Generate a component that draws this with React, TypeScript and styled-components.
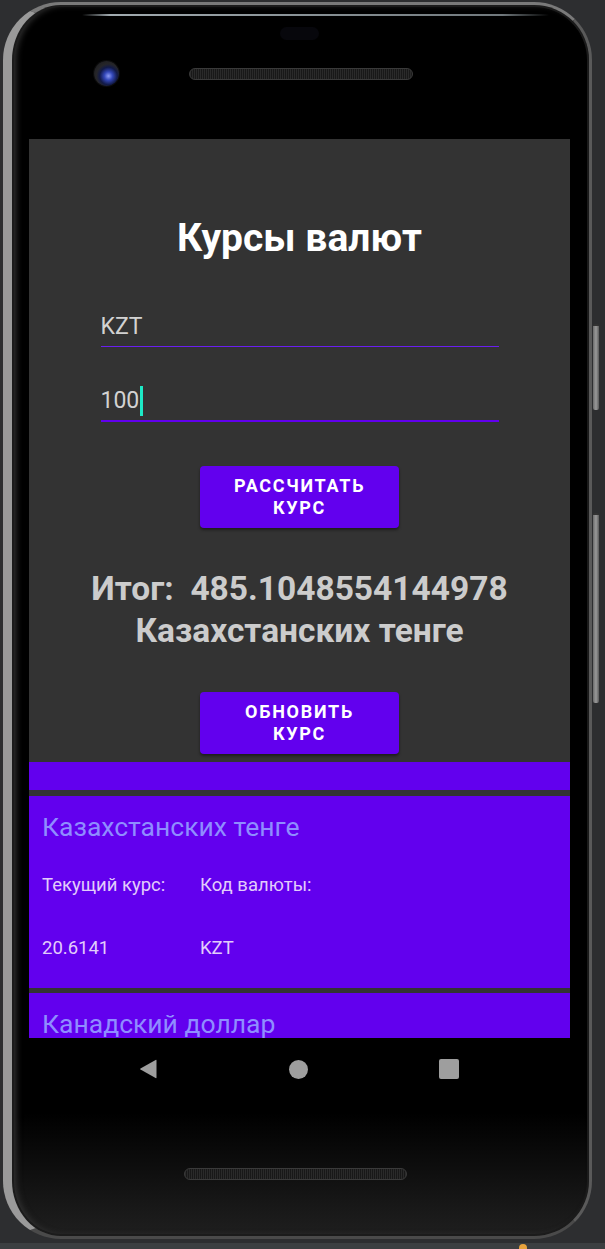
import React from "react";
import styled, { createGlobalStyle } from "styled-components";

const Global = createGlobalStyle`
  html, body { margin: 0; padding: 0; background: #2d2e30; }
  body { font-family: Roboto, "Noto Sans", Arial, sans-serif; }
  * { box-sizing: border-box; }
`;

const Page = styled.div`
  width: 605px;
  height: 1249px;
  overflow: hidden;
  padding-top: 2px;
  display: flex;
  flex-direction: column;
`;

const Frame = styled.div`
  position: relative;
  flex-shrink: 0;
  margin-left: 3px;
  width: 589px;
  height: 1237px;
  border-radius: 58px;
  border-style: solid;
  border-width: 3px 3px 3px 9px;
  border-color: #7a7a7a #5a5a5a #4a4a4a #9a9a9a;
  background: linear-gradient(180deg, #000 0%, #000 90%, #1f1f1f 100%);
  box-shadow: inset 0 0 0 2px #1b1b1b, inset 4px 0 6px #333;
  display: flex;
  flex-direction: column;
  padding: 0 19px 0 17px;
`;

const Glare = styled.div`
  position: absolute;
  top: 9px;
  left: 70px;
  right: 40px;
  height: 2px;
  border-radius: 2px;
  background: linear-gradient(90deg, rgba(170,180,185,0) 0%, rgba(170,180,185,0.95) 6%, rgba(140,150,155,0.8) 90%, rgba(140,150,155,0) 100%);
`;

const SideButton = styled.div<{ $top: number; $h: number }>`
  position: absolute;
  right: -10px;
  top: ${(p) => p.$top}px;
  width: 6px;
  height: ${(p) => p.$h}px;
  border-radius: 2px;
  background: linear-gradient(90deg, #6a6a6a, #9a9a9a 50%, #5a5a5a);
  border-top: 2px solid #333;
`;

const TopBezel = styled.div`
  height: 134px;
  flex-shrink: 0;
  display: flex;
  flex-direction: column;
`;

const Sensor = styled.div`
  align-self: center;
  margin-top: 22px;
  width: 39px;
  height: 13px;
  border-radius: 7px;
  background: #07070c;
`;

const CamRow = styled.div`
  margin-top: 21px;
  display: flex;
  align-items: center;
  padding-left: 65px;
  gap: 70px;
`;

const Camera = styled.div`
  width: 25px;
  height: 25px;
  border-radius: 50%;
  background: radial-gradient(circle at 58% 60%, #8d9cf5 0%, #3347b8 20%, #121a48 42%, #262629 58%, #161618 100%);
  box-shadow: 0 0 0 1px #0c0c0c;
`;

const Speaker = styled.div<{ $w: number }>`
  width: ${(p) => p.$w}px;
  height: 12px;
  border-radius: 6px;
  border: 1px solid #3a3a3a;
  background: repeating-linear-gradient(90deg, #2a2a2a 0 1px, #181818 1px 2px);
`;

const Screen = styled.div`
  height: 899px;
  flex-shrink: 0;
  background: #333333;
  overflow: hidden;
  display: flex;
  flex-direction: column;
  align-items: center;
  & > * { flex-shrink: 0; }
`;

const Title = styled.h1`
  margin: 78px 0 0;
  font-size: 39px;
  line-height: 42px;
  font-weight: 700;
  color: #ffffff;
`;

const Field = styled.div<{ $focused?: boolean }>`
  width: 398px;
  margin-top: ${(p) => (p.$focused ? 39 : 54)}px;
  font-size: 23px;
  line-height: 28px;
  color: #d2d2d2;
  padding-bottom: ${(p) => (p.$focused ? 4 : 5)}px;
  border-bottom: ${(p) => (p.$focused ? "2px solid #6200ee" : "1px solid #6a1ff0")};
  display: flex;
  align-items: center;
`;

const Cursor = styled.span`
  display: inline-block;
  width: 3px;
  height: 30px;
  margin-left: 1px;
  background: #1de9c6;
`;

const Button = styled.button<{ $mt: number }>`
  margin-top: ${(p) => p.$mt}px;
  width: 199px;
  height: 62px;
  border: none;
  border-radius: 4px;
  background: #6200ee;
  color: #ffffff;
  font-family: Roboto, Arial, sans-serif;
  font-size: 18px;
  font-weight: 700;
  letter-spacing: 1.7px;
  line-height: 22px;
  text-transform: uppercase;
  box-shadow: 0 2px 3px rgba(0, 0, 0, 0.45);
  padding: 0 12px;
`;

const Result = styled.div`
  margin-top: 40px;
  font-size: 33.5px;
  line-height: 42px;
  font-weight: 700;
  color: #cccccc;
  text-align: center;
  white-space: pre;
`;

const Band = styled.div`
  margin-top: 8px;
  width: 100%;
  height: 28px;
  background: #6200ee;
`;

const Card = styled.div<{ $mt: number }>`
  margin-top: ${(p) => p.$mt}px;
  width: 100%;
  height: 192px;
  background: #6200ee;
  padding: 15px 13px;
`;

const CardTitle = styled.div`
  font-size: 26.5px;
  line-height: 32px;
  color: #8f8dff;
`;

const InfoGrid = styled.div`
  margin-top: 31px;
  display: grid;
  grid-template-columns: 158px 1fr;
  row-gap: 41px;
  font-size: 18.5px;
  line-height: 22px;
  color: #e2cdfb;
`;

const NavBar = styled.div`
  height: 62px;
  flex-shrink: 0;
  display: flex;
  align-items: center;
  justify-content: space-between;
  padding: 0 111px 0 110px;
`;

const NavCircle = styled.div`
  width: 19px;
  height: 19px;
  border-radius: 50%;
  background: #9e9e9e;
`;

const NavSquare = styled.div`
  width: 20px;
  height: 20px;
  border-radius: 2px;
  background: #9e9e9e;
`;

const BottomBezel = styled.div`
  padding-top: 68px;
  padding-left: 155px;
`;

const Footer = styled.div`
  position: relative;
  margin-top: 4px;
  height: 6px;
  flex-shrink: 0;
  background: #3c3f41;
`;

const Dot = styled.div`
  position: absolute;
  left: 519px;
  top: 1px;
  width: 8px;
  height: 8px;
  border-radius: 50%;
  background: #e8a33c;
`;

function Back() {
  return (
    <svg width="19" height="20" viewBox="0 0 19 20">
      <path d="M17.5 1.5 L17.5 18.5 Q17.5 19.5 16.6 19 L1.5 10.6 Q0.6 10 1.5 9.4 L16.6 1 Q17.5 0.5 17.5 1.5 Z" fill="#9e9e9e" />
    </svg>
  );
}

type Currency = { name: string; rate: string; code: string };

const currencies: Currency[] = [
  { name: "Казахстанских тенге", rate: "20.6141", code: "KZT" },
  { name: "Канадский доллар", rate: "", code: "" },
];

export default function App() {
  return (
    <>
      <Global />
      <Page>
        <Frame>
          <Glare />
          <SideButton $top={319} $h={86} />
          <SideButton $top={508} $h={190} />
          <TopBezel>
            <Sensor />
            <CamRow>
              <Camera />
              <Speaker $w={224} />
            </CamRow>
          </TopBezel>
          <Screen>
            <Title>Курсы валют</Title>
            <Field>KZT</Field>
            <Field $focused>
              100
              <Cursor />
            </Field>
            <Button $mt={44}>
              Рассчитать
              <br />
              курс
            </Button>
            <Result>
              {"Итог:  485.1048554144978"}
              <br />
              Казахстанских тенге
            </Result>
            <Button $mt={40}>
              Обновить
              <br />
              курс
            </Button>
            <Band />
            {currencies.map((c, i) => (
              <Card key={c.name} $mt={i === 0 ? 6 : 5}>
                <CardTitle>{c.name}</CardTitle>
                <InfoGrid>
                  <span>Текущий курс:</span>
                  <span>Код валюты:</span>
                  <span>{c.rate}</span>
                  <span>{c.code}</span>
                </InfoGrid>
              </Card>
            ))}
          </Screen>
          <NavBar>
            <Back />
            <NavCircle />
            <NavSquare />
          </NavBar>
          <BottomBezel>
            <Speaker $w={223} />
          </BottomBezel>
        </Frame>
        <Footer>
          <Dot />
        </Footer>
      </Page>
    </>
  );
}
